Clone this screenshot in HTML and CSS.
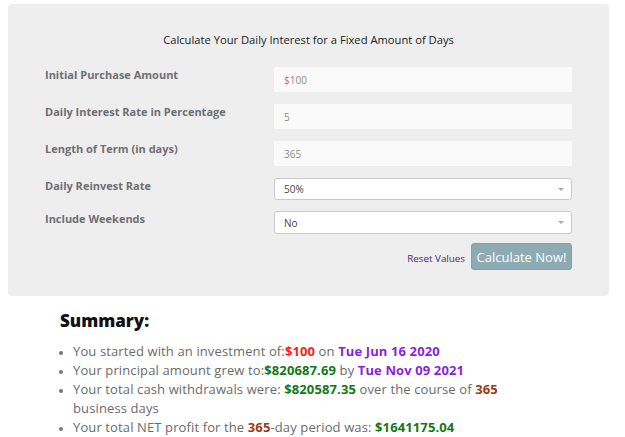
FILE: index.html
```html
<!DOCTYPE html>
<html>
<head>
<meta charset="utf-8">
<link rel="stylesheet" href="styles.css">
</head>
<body>
<div class="panel">
  <div class="title">Calculate Your Daily Interest for a Fixed Amount of Days</div>
  <div class="row row-input">
    <label class="label">Initial Purchase Amount</label>
    <div class="field input">$100</div>
  </div>
  <div class="row row-input">
    <label class="label">Daily Interest Rate in Percentage</label>
    <div class="field input">5</div>
  </div>
  <div class="row row-input">
    <label class="label">Length of Term (in days)</label>
    <div class="field input">365</div>
  </div>
  <div class="row row-select">
    <label class="label">Daily Reinvest Rate</label>
    <div class="field select">50%<span class="caret"></span></div>
  </div>
  <div class="row row-select row-select2">
    <label class="label">Include Weekends</label>
    <div class="field select">No<span class="caret"></span></div>
  </div>
  <div class="actions">
    <a class="reset">Reset Values</a>
    <button class="calc">Calculate Now!</button>
  </div>
</div>
<div class="summary">
  <h2 class="sum-title">Summary:</h2>
  <ul class="sum-list">
    <li>You started with an investment of:<b class="red">$100</b> on <b class="purple">Tue Jun 16 2020</b></li>
    <li>Your principal amount grew to:<b class="green">$820687.69</b> by <b class="purple">Tue Nov 09 2021</b></li>
    <li>Your total cash withdrawals were: <b class="green">$820587.35</b> over the course of <b class="brown">365</b> business days</li>
    <li>Your total NET profit for the <b class="brown">365</b>-day period was: <b class="green">$1641175.04</b></li>
  </ul>
</div>
</body>
</html>
```
FILE: styles.css
```css
* { box-sizing: border-box; }
body {
  margin: 0;
  background: #fff;
  font-family: "Open Sans", "DejaVu Sans", sans-serif;
}
.panel {
  margin: 4px 16px 0 8px;
  background: #eeeeee;
  border-radius: 4px;
  padding: 26px 37px 26px 37px;
}
.title {
  text-align: center;
  font-size: 11.2px;
  line-height: 20px;
  color: #222;
  margin-bottom: 17px;
}
.row {
  display: grid;
  grid-template-columns: 229px 1fr;
}
.row-input { margin-bottom: 12px; }
.row-select { margin-bottom: 11px; }
.row-select2 { margin-bottom: 9px; }
.label {
  font-size: 11px;
  font-weight: 700;
  color: #6f6f74;
  line-height: 16px;
}
.field {
  font-size: 10px;
  display: flex;
  align-items: center;
  padding-left: 10px;
}
.input {
  height: 25px;
  background: #fafafa;
  color: #8a8a8a;
}
.select {
  height: 22px;
  background: #fff;
  border: 1px solid #c9c9c9;
  border-radius: 3px;
  color: #444;
  position: relative;
  padding-left: 9px;
}
.row-select2 .select { height: 23px; }
.caret {
  position: absolute;
  right: 7px;
  top: 9px;
  width: 0;
  height: 0;
  border-left: 3px solid transparent;
  border-right: 3px solid transparent;
  border-top: 3px solid #aaa;
}
.actions {
  display: flex;
  justify-content: flex-end;
  align-items: flex-end;
  gap: 6px;
}
.reset {
  font-size: 9.8px;
  color: #4f1a7d;
  line-height: 14px;
  margin-bottom: 4px;
}
.calc {
  height: 27px;
  width: 101px;
  background: #8eaab2;
  border: 1px solid #86a1a9;
  border-radius: 3px;
  color: #fff;
  font-family: inherit;
  font-size: 13px;
  padding: 0;
}
.summary {
  padding-left: 60px;
  width: 545px;
}
.sum-title {
  margin: 12px 0 8px 0;
  font-size: 17px;
  line-height: 26px;
  font-weight: 800;
  color: #111;
}
.sum-list {
  margin: 0;
  padding-left: 13px;
  font-size: 13px;
  line-height: 19px;
  color: #6b6b6b;
  letter-spacing: 0.12px;
}
.sum-list li::marker { color: #777; font-size: 10px; }
.sum-list b { font-weight: 700; }
.red { color: #ff1a1a; }
.purple { color: #8a1fe0; }
.green { color: #127a12; }
.brown { color: #9a3b14; }
```
